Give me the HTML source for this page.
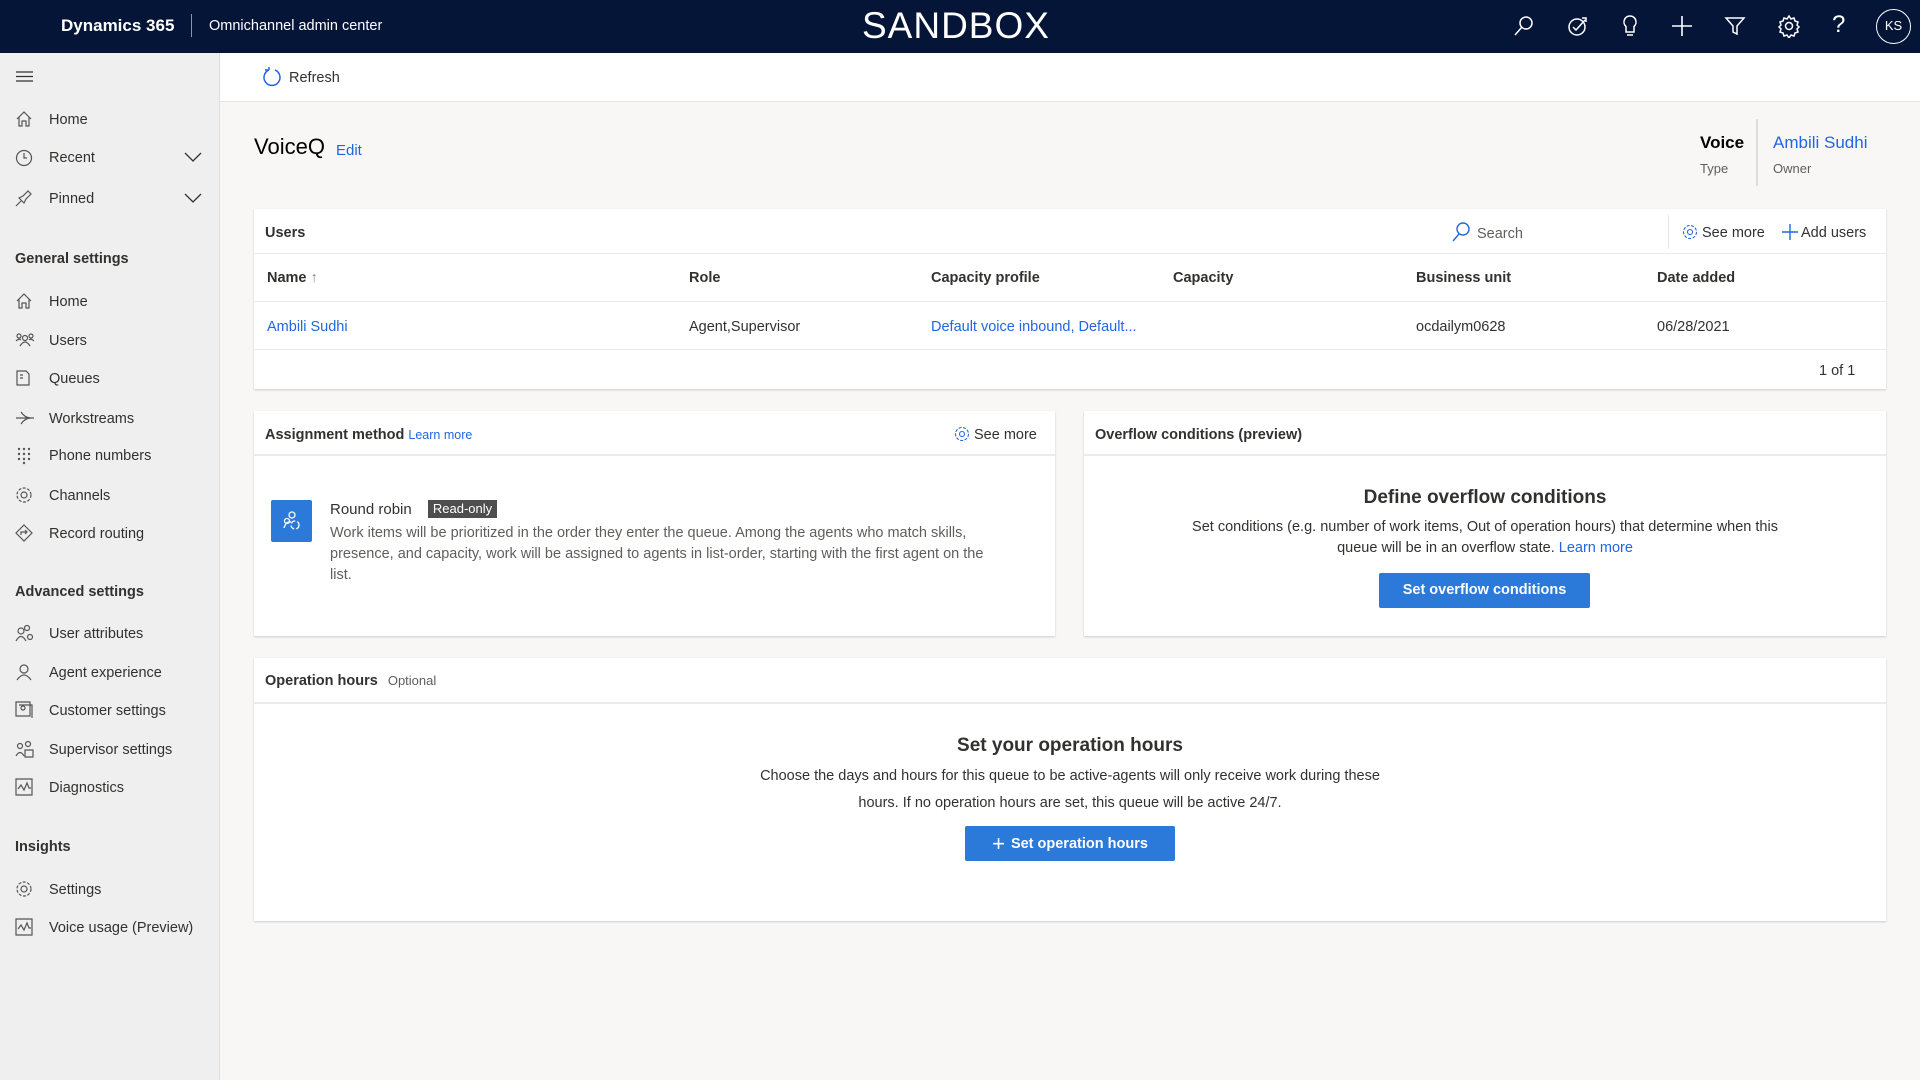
<!DOCTYPE html>
<html><head><meta charset="utf-8"><style>
*{box-sizing:border-box;margin:0;padding:0}
body{width:1920px;height:1080px;position:relative;overflow:hidden;background:#f8f7f6;font-family:"Liberation Sans",sans-serif;color:#323130;font-size:14.5px}
.a{position:absolute;white-space:nowrap}
.hdr{left:0;top:0;width:1920px;height:53px;background:#051537;color:#fff}
.side{left:0;top:53px;width:220px;height:1027px;background:#efefef;border-right:1px solid #e1dfdd}
.top{left:220px;top:53px;width:1700px;height:49px;background:#fff;border-bottom:1px solid #e8e6e4}
.card{background:#fff;box-shadow:0 1px 2px rgba(0,0,0,.18)}
.si{font-size:14.5px;color:#323130}
.blue{color:#2266e3}
.btn{background:#2b79d8;color:#fff;font-weight:bold;font-size:14.5px;text-align:center;border-radius:2px}
.line{height:1px;background:#edebe9}
.hd{font-weight:bold;font-size:14.5px;color:#323130}
</style></head><body>
<div class="a hdr">
 <div class="a" style="left:61px;top:16px;font-size:17px;font-weight:bold">Dynamics 365</div>
 <div class="a" style="left:191px;top:14px;width:1px;height:23px;background:#8a93a8"></div>
 <div class="a" style="left:209px;top:18px;font-size:14.5px">Omnichannel admin center</div>
 <div class="a" style="left:862px;top:5px;font-size:37px;letter-spacing:1px">SANDBOX</div>
 <svg class="a" style="left:1512px;top:14px" width="24" height="24" fill="none" stroke="#fff" stroke-width="1.5"><circle cx="14" cy="9" r="6"/><path d="M10 13L3 21"/></svg>
 <svg class="a" style="left:1566px;top:14px" width="24" height="24" fill="none" stroke="#fff" stroke-width="1.5"><circle cx="11" cy="13" r="8"/><path d="M7 13l3 3 9-10M16 4h4v4"/></svg>
 <svg class="a" style="left:1619px;top:14px" width="22" height="26" fill="none" stroke="#fff" stroke-width="1.5"><path d="M11 2a6 6 0 0 0-4 10.5V18h8v-5.5A6 6 0 0 0 11 2zM8 21h6"/></svg>
 <svg class="a" style="left:1671px;top:15px" width="22" height="22" fill="none" stroke="#fff" stroke-width="1.6"><path d="M11 1v20M1 11h20"/></svg>
 <svg class="a" style="left:1724px;top:15px" width="22" height="22" fill="none" stroke="#fff" stroke-width="1.5"><path d="M2 3h18l-7 8v8l-4-2v-6z"/></svg>
 <svg class="a" style="left:1777px;top:14px" width="24" height="24" fill="none" stroke="#fff" stroke-width="1.5"><circle cx="12" cy="12" r="3.5"/><path d="M12 2l2 3 3-1 1 3 3 1-1 3 2 2-2 2 1 3-3 1-1 3-3-1-2 3-2-3-3 1-1-3-3-1 1-3-2-2 2-2-1-3 3-1 1-3 3 1z"/></svg>
 <div class="a" style="left:1832px;top:11px;font-size:24px;font-weight:300">?</div>
 <div class="a" style="left:1876px;top:9px;width:35px;height:35px;border:1.5px solid #fff;border-radius:50%;font-size:13px;text-align:center;line-height:32px">KS</div>
</div>
<div class="a side">
 <svg class="a" style="left:16px;top:17px" width="18" height="14" stroke="#323130" stroke-width="1.3"><path d="M0 2h17M0 6.5h17M0 11h17"/></svg>
</div>
<div class="a" style="left:0;top:1px;width:220px">
 <div class="a si" style="left:49px;top:111px">Home</div>
 <div class="a si" style="left:49px;top:149px">Recent</div>
 <div class="a si" style="left:49px;top:190px">Pinned</div>
 <svg class="a" style="left:184px;top:150px" width="18" height="12" fill="none" stroke="#323130" stroke-width="1.3"><path d="M1 2l8 8 8-8"/></svg>
 <svg class="a" style="left:184px;top:191px" width="18" height="12" fill="none" stroke="#323130" stroke-width="1.3"><path d="M1 2l8 8 8-8"/></svg>
 <svg class="a" style="left:15px;top:109px" width="18" height="18" fill="none" stroke="#555" stroke-width="1.2"><path d="M2 9L9 2l7 7M4 7v9h3v-5h4v5h3V7"/></svg>
 <svg class="a" style="left:15px;top:148px" width="18" height="18" fill="none" stroke="#555" stroke-width="1.2"><circle cx="9" cy="9" r="7.5"/><path d="M9 4v5h3"/></svg>
 <svg class="a" style="left:15px;top:188px" width="18" height="18" fill="none" stroke="#555" stroke-width="1.2"><path d="M1 17l5-5M4 9l5 5 2-4 5-5-3-3-5 5z"/></svg>
 <div class="a hd" style="left:15px;top:250px">General settings</div>
 <div class="a si" style="left:49px;top:293px">Home</div>
 <div class="a si" style="left:49px;top:332px">Users</div>
 <div class="a si" style="left:49px;top:370px">Queues</div>
 <div class="a si" style="left:49px;top:410px">Workstreams</div>
 <div class="a si" style="left:49px;top:447px">Phone numbers</div>
 <div class="a si" style="left:49px;top:487px">Channels</div>
 <div class="a si" style="left:49px;top:525px">Record routing</div>
 <div class="a hd" style="left:15px;top:583px">Advanced settings</div>
 <div class="a si" style="left:49px;top:625px">User attributes</div>
 <div class="a si" style="left:49px;top:664px">Agent experience</div>
 <div class="a si" style="left:49px;top:702px">Customer settings</div>
 <div class="a si" style="left:49px;top:741px">Supervisor settings</div>
 <div class="a si" style="left:49px;top:779px">Diagnostics</div>
 <div class="a hd" style="left:15px;top:838px">Insights</div>
 <div class="a si" style="left:49px;top:881px">Settings</div>
 <div class="a si" style="left:49px;top:919px">Voice usage (Preview)</div>
 <svg class="a" style="left:15px;top:291px" width="18" height="18" fill="none" stroke="#555" stroke-width="1.2"><path d="M2 9L9 2l7 7M4 7v9h3v-5h4v5h3V7"/></svg>
 <svg class="a" style="left:15px;top:330px" width="20" height="18" fill="none" stroke="#555" stroke-width="1.2"><circle cx="4" cy="5" r="2"/><circle cx="10" cy="7" r="2.5"/><circle cx="16" cy="5" r="2"/><path d="M5 15q5-8 10 0M1 10q3-3 5-1M14 9q2-2 5 1"/></svg>
 <svg class="a" style="left:15px;top:368px" width="18" height="18" fill="none" stroke="#555" stroke-width="1.2"><path d="M2 16V2h9l3 3v11zM5 6h3M5 9h3"/></svg>
 <svg class="a" style="left:15px;top:408px" width="20" height="18" fill="none" stroke="#555" stroke-width="1.2"><path d="M1 9h18M6 3q4 6 10 6M6 15q4-6 10-6"/></svg>
 <svg class="a" style="left:17px;top:446px" width="14" height="18" fill="#555"><circle cx="2" cy="2" r="1.2"/><circle cx="7" cy="2" r="1.2"/><circle cx="12" cy="2" r="1.2"/><circle cx="2" cy="7" r="1.2"/><circle cx="7" cy="7" r="1.2"/><circle cx="12" cy="7" r="1.2"/><circle cx="2" cy="12" r="1.2"/><circle cx="7" cy="12" r="1.2"/><circle cx="12" cy="12" r="1.2"/><circle cx="7" cy="16" r="1.2"/></svg>
 <svg class="a" style="left:15px;top:485px" width="18" height="18" fill="none" stroke="#555" stroke-width="1.2"><circle cx="9" cy="9" r="3"/><circle cx="9" cy="9" r="7" stroke-dasharray="3 1.5"/></svg>
 <svg class="a" style="left:15px;top:523px" width="18" height="18" fill="none" stroke="#555" stroke-width="1.2"><path d="M9 1l8 8-8 8-8-8zM6 11V8h6M10 6l2 2-2 2"/></svg>
 <svg class="a" style="left:15px;top:623px" width="20" height="18" fill="none" stroke="#555" stroke-width="1.2"><circle cx="6" cy="7" r="3"/><circle cx="12" cy="4" r="2.5"/><path d="M1 17q5-9 10 0"/><circle cx="15" cy="13" r="2.5"/></svg>
 <svg class="a" style="left:15px;top:662px" width="18" height="18" fill="none" stroke="#555" stroke-width="1.2"><circle cx="9" cy="6" r="4"/><path d="M2 17q7-10 14 0"/></svg>
 <svg class="a" style="left:15px;top:700px" width="18" height="18" fill="none" stroke="#555" stroke-width="1.2"><path d="M1 1h14v14H1zM4 4h13v13"/><circle cx="8" cy="7" r="2"/></svg>
 <svg class="a" style="left:15px;top:739px" width="20" height="18" fill="none" stroke="#555" stroke-width="1.2"><circle cx="5" cy="6" r="2.5"/><circle cx="13" cy="4" r="2.5"/><path d="M1 16q4-7 8 0M10 10h8v7h-8z"/></svg>
 <svg class="a" style="left:15px;top:777px" width="18" height="18" fill="none" stroke="#555" stroke-width="1.2"><path d="M1 1h16v16H1zM3 11l3-4 3 5 3-7 2 5h2"/></svg>
 <svg class="a" style="left:15px;top:879px" width="18" height="18" fill="none" stroke="#555" stroke-width="1.2"><circle cx="9" cy="9" r="3"/><circle cx="9" cy="9" r="7" stroke-dasharray="3 1.5"/></svg>
 <svg class="a" style="left:15px;top:917px" width="18" height="18" fill="none" stroke="#555" stroke-width="1.2"><path d="M1 1h16v16H1zM3 11l3-4 3 5 3-7 2 5h2"/></svg>
</div>
<div class="a top">
 <svg class="a" style="left:42px;top:14px" width="20" height="22" fill="none" stroke="#2266e3" stroke-width="1.5"><path d="M7 3a8 8 0 1 0 6 0M7 3V0M7 3H3"/></svg>
 <div class="a" style="left:69px;top:17px;font-size:14.5px">Refresh</div>
</div>
<div class="a" style="left:254px;top:134px;font-size:22px;color:#000">VoiceQ</div>
<div class="a blue" style="left:336px;top:142px;font-size:15px">Edit</div>
<div class="a" style="left:1700px;top:133px;font-size:17px;font-weight:bold;color:#000">Voice</div>
<div class="a" style="left:1700px;top:161px;font-size:13px;color:#605e5c">Type</div>
<div class="a" style="left:1756px;top:119px;width:2px;height:67px;background:#ddd"></div>
<div class="a blue" style="left:1773px;top:133px;font-size:17px">Ambili Sudhi</div>
<div class="a" style="left:1773px;top:161px;font-size:13px;color:#605e5c">Owner</div>

<div class="a card" style="left:254px;top:209px;width:1632px;height:180px">
 <div class="a hd" style="left:11px;top:16px">Users</div>
 <svg class="a" style="left:1197px;top:13px" width="20" height="20" fill="none" stroke="#2266e3" stroke-width="1.4"><circle cx="12" cy="7" r="6"/><path d="M8 12L2 19"/></svg>
 <div class="a" style="left:1223px;top:17px;color:#605e5c">Search</div>
 <div class="a" style="left:1414px;top:6px;width:1px;height:34px;background:#e8e6e4"></div>
 <svg class="a" style="left:1428px;top:15px" width="16" height="16" fill="none" stroke="#2266e3" stroke-width="1.1"><circle cx="8" cy="8" r="2.5"/><circle cx="8" cy="8" r="6.5" stroke-dasharray="3 1.5"/></svg>
 <div class="a" style="left:1448px;top:16px">See more</div>
 <svg class="a" style="left:1528px;top:15px" width="16" height="16" stroke="#2266e3" stroke-width="1.4"><path d="M8 0v16M0 8h16"/></svg>
 <div class="a" style="left:1547px;top:16px">Add users</div>
 <div class="a line" style="left:0;top:44px;width:1632px"></div>
 <div class="a" style="left:13px;top:61px;font-weight:600">Name <span style="color:#888">↑</span></div>
 <div class="a" style="left:435px;top:61px;font-weight:600">Role</div>
 <div class="a" style="left:677px;top:61px;font-weight:600">Capacity profile</div>
 <div class="a" style="left:919px;top:61px;font-weight:600">Capacity</div>
 <div class="a" style="left:1162px;top:61px;font-weight:600">Business unit</div>
 <div class="a" style="left:1403px;top:61px;font-weight:600">Date added</div>
 <div class="a line" style="left:0;top:92px;width:1632px"></div>
 <div class="a blue" style="left:13px;top:110px">Ambili Sudhi</div>
 <div class="a" style="left:435px;top:110px">Agent,Supervisor</div>
 <div class="a blue" style="left:677px;top:110px">Default voice inbound, Default...</div>
 <div class="a" style="left:1162px;top:110px">ocdailym0628</div>
 <div class="a" style="left:1403px;top:110px">06/28/2021</div>
 <div class="a line" style="left:0;top:140px;width:1632px"></div>
 <div class="a" style="left:1565px;top:154px">1 of 1</div>
</div>

<div class="a card" style="left:254px;top:411px;width:801px;height:225px">
 <div class="a hd" style="left:11px;top:16px">Assignment method <span class="blue" style="font-size:12.5px;font-weight:normal">Learn more</span></div>
 <svg class="a" style="left:700px;top:15px" width="16" height="16" fill="none" stroke="#2266e3" stroke-width="1.1"><circle cx="8" cy="8" r="2.5"/><circle cx="8" cy="8" r="6.5" stroke-dasharray="3 1.5"/></svg>
 <div class="a" style="left:720px;top:16px">See more</div>
 <div class="a line" style="left:0;top:43px;width:801px;height:2px"></div>
 <div class="a" style="left:17px;top:89px;width:41px;height:42px;background:#2b79d8;border-radius:2px">
  <svg class="a" style="left:11px;top:10px" width="20" height="22" fill="none" stroke="#fff" stroke-width="1.3"><circle cx="10" cy="5" r="3"/><path d="M2 18q2-7 7-6"/><circle cx="5" cy="11" r="2.5"/><circle cx="13" cy="15" r="4" stroke-dasharray="5 2"/></svg>
 </div>
 <div class="a" style="left:76px;top:90px;font-size:15px">Round robin</div>
 <div class="a" style="left:174px;top:89px;width:69px;height:18px;background:#4e4e4e;color:#fff;font-size:13px;text-align:center;line-height:18px">Read-only</div>
 <div class="a" style="left:76px;top:112px;color:#605e5c;line-height:21px;white-space:normal;width:660px;font-size:14.5px">Work items will be prioritized in the order they enter the queue. Among the agents who match skills, presence, and capacity, work will be assigned to agents in list-order, starting with the first agent on the list.</div>
</div>

<div class="a card" style="left:1084px;top:411px;width:802px;height:225px">
 <div class="a hd" style="left:11px;top:16px">Overflow conditions (preview)</div>
 <div class="a line" style="left:0;top:43px;width:802px;height:2px"></div>
 <div class="a" style="left:0;top:76px;width:802px;text-align:center;font-size:19px;font-weight:bold">Define overflow conditions</div>
 <div class="a" style="left:96px;top:106px;width:610px;text-align:center;white-space:normal;line-height:21px">Set conditions (e.g. number of work items, Out of operation hours) that determine when this queue will be in an overflow state. <span class="blue">Learn more</span></div>
 <div class="a btn" style="left:295px;top:162px;width:211px;height:35px;line-height:35px">Set overflow conditions</div>
</div>

<div class="a card" style="left:254px;top:658px;width:1632px;height:263px">
 <div class="a hd" style="left:11px;top:15px">Operation hours <span style="font-size:13px;font-weight:normal;color:#605e5c;margin-left:6px">Optional</span></div>
 <div class="a line" style="left:0;top:44px;width:1632px;height:2px"></div>
 <div class="a" style="left:0;top:77px;width:1632px;text-align:center;font-size:19px;font-weight:bold">Set your operation hours</div>
 <div class="a" style="left:486px;top:105px;width:660px;text-align:center;white-space:normal;line-height:27px">Choose the days and hours for this queue to be active-agents will only receive work during these hours. If no operation hours are set, this queue will be active 24/7.</div>
 <div class="a btn" style="left:711px;top:168px;width:210px;height:35px;line-height:35px"><span style="font-size:22px;font-weight:300;vertical-align:-3px;margin-right:6px">+</span>Set operation hours</div>
</div>
</body></html>
